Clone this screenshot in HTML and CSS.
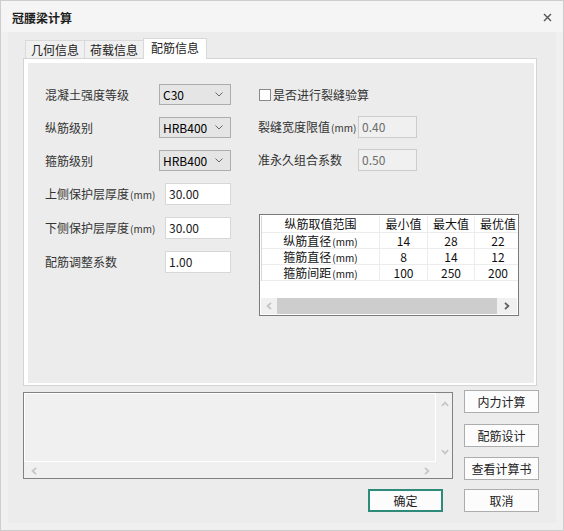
FILE: index.html
```html
<!DOCTYPE html>
<html lang="zh">
<head>
<meta charset="utf-8">
<title>冠腰梁计算</title>
<link rel="stylesheet" href="styles.css">
</head>
<body>
<div class="window">
  <div class="titlebar">
    <span class="title">冠腰梁计算</span>
    <svg class="close" width="9" height="9" viewBox="0 0 9 9"><path d="M1 1L8 8M8 1L1 8" stroke="#555" stroke-width="1.4" fill="none"/></svg>
  </div>
  <div class="client">
    <div class="tabs">
      <div class="tab t1">几何信息</div>
      <div class="tab t2">荷载信息</div>
      <div class="tab t3 active">配筋信息</div>
    </div>
    <div class="panel">
      <div class="panel-inner">
        <div class="col-left">
          <div class="row">
            <span class="lbl lbl-sel">混凝土强度等级</span>
            <div class="select"><span>C30</span><svg width="8" height="5" viewBox="0 0 8 5"><polyline points="0.5,0.5 4,4 7.5,0.5" fill="none" stroke="#666" stroke-width="1"/></svg></div>
          </div>
          <div class="row">
            <span class="lbl lbl-sel">纵筋级别</span>
            <div class="select"><span>HRB400</span><svg width="8" height="5" viewBox="0 0 8 5"><polyline points="0.5,0.5 4,4 7.5,0.5" fill="none" stroke="#666" stroke-width="1"/></svg></div>
          </div>
          <div class="row">
            <span class="lbl lbl-sel">箍筋级别</span>
            <div class="select"><span>HRB400</span><svg width="8" height="5" viewBox="0 0 8 5"><polyline points="0.5,0.5 4,4 7.5,0.5" fill="none" stroke="#666" stroke-width="1"/></svg></div>
          </div>
          <div class="row row-in">
            <span class="lbl lbl-in">上侧保护层厚度<span class="unit">(mm)</span></span>
            <div class="input">30.00</div>
          </div>
          <div class="row row-in">
            <span class="lbl lbl-in">下侧保护层厚度<span class="unit">(mm)</span></span>
            <div class="input">30.00</div>
          </div>
          <div class="row row-in">
            <span class="lbl lbl-in">配筋调整系数</span>
            <div class="input">1.00</div>
          </div>
        </div>
        <div class="col-right">
          <div class="row">
            <span class="checkbox"></span>
            <span class="lbl">是否进行裂缝验算</span>
          </div>
          <div class="row row-in">
            <span class="lbl lbl-r">裂缝宽度限值<span class="unit">(mm)</span></span>
            <div class="input disabled">0.40</div>
          </div>
          <div class="row row-in">
            <span class="lbl lbl-r">准永久组合系数</span>
            <div class="input disabled">0.50</div>
          </div>
          <div class="grid-box">
            <div class="grid">
              <div class="cell head">纵筋取值范围</div>
              <div class="cell head">最小值</div>
              <div class="cell head">最大值</div>
              <div class="cell head">最优值</div>
              <div class="cell">纵筋直径<span class="unit">(mm)</span></div>
              <div class="cell">14</div>
              <div class="cell">28</div>
              <div class="cell">22</div>
              <div class="cell">箍筋直径<span class="unit">(mm)</span></div>
              <div class="cell">8</div>
              <div class="cell">14</div>
              <div class="cell">12</div>
              <div class="cell">箍筋间距<span class="unit">(mm)</span></div>
              <div class="cell">100</div>
              <div class="cell">250</div>
              <div class="cell">200</div>
            </div>
            <div class="hbar">
              <span class="arrow-l"><svg width="6" height="8" viewBox="0 0 6 8"><polyline points="5,0.8 1.6,4 5,7.2" fill="none" stroke="#c4c4c4" stroke-width="1.8"/></svg></span>
              <span class="thumb"></span>
              <span class="arrow-r"><svg width="6" height="8" viewBox="0 0 6 8"><polyline points="1,0.8 4.4,4 1,7.2" fill="none" stroke="#606060" stroke-width="1.8"/></svg></span>
            </div>
          </div>
        </div>
      </div>
    </div>
    <div class="bottom">
      <div class="log">
        <div class="log-content"></div>
        <div class="vscroll">
          <svg width="8" height="6" viewBox="0 0 8 6"><polyline points="0.8,5 4,1.6 7.2,5" fill="none" stroke="#c6c6c6" stroke-width="1.8"/></svg>
          <svg width="8" height="6" viewBox="0 0 8 6"><polyline points="0.8,1 4,4.4 7.2,1" fill="none" stroke="#c6c6c6" stroke-width="1.8"/></svg>
        </div>
        <div class="hscroll">
          <svg width="6" height="8" viewBox="0 0 6 8"><polyline points="5,0.8 1.6,4 5,7.2" fill="none" stroke="#c6c6c6" stroke-width="1.8"/></svg>
          <svg width="6" height="8" viewBox="0 0 6 8"><polyline points="1,0.8 4.4,4 1,7.2" fill="none" stroke="#c6c6c6" stroke-width="1.8"/></svg>
        </div>
        <div class="corner"></div>
      </div>
      <div class="btn-col">
        <div class="btn">内力计算</div>
        <div class="btn b2">配筋设计</div>
        <div class="btn b3">查看计算书</div>
      </div>
    </div>
    <div class="actions">
      <div class="btn primary">确定</div>
      <div class="btn">取消</div>
    </div>
  </div>
</div>
</body>
</html>
```

FILE: styles.css
```css
* { box-sizing: border-box; }
html, body { margin: 0; padding: 0; }
body {
  width: 564px;
  height: 531px;
  font-family: "Noto Sans CJK SC", "Noto Sans", sans-serif;
  font-size: 12px;
  color: #333;
  background: #f0f0f0;
}
.window {
  width: 564px;
  height: 531px;
  border: 1px solid #cdcdcd;
  background: #f0f0f0;
  display: flex;
  flex-direction: column;
}
.titlebar {
  height: 31px;
  flex: none;
  background: #f5f5f5;
  display: flex;
  align-items: center;
  justify-content: space-between;
  padding: 1px 11px 0 11px;
}
.title { font-weight: bold; color: #1e1e1e; font-size: 12px; }
.close { display: block; }
.client {
  margin: 0 7px;
  height: 491px;
  background: #ececec;
  padding: 6px 0 0 15px;
}
.tabs {
  display: flex;
  align-items: flex-end;
  height: 20px;
  margin-left: 2px;
  position: relative;
  z-index: 1;
}
.tab {
  height: 18px;
  border: 1px solid #d9d9d9;
  border-bottom: none;
  background: #f0f0f0;
  text-align: center;
  line-height: 17px;
  color: #222;
  margin-right: -1px;
}
.t1, .t2 { width: 60px; }
.t3 { width: 64px; }
.tab.active {
  height: 21px;
  background: #fff;
  margin-bottom: -1px;
  line-height: 18px;
}
.panel {
  width: 514px;
  height: 328px;
  border: 1px solid #d4d4d4;
  background: #fff;
  padding: 4px 2px 2px 4px;
}
.panel-inner {
  height: 100%;
  background: #ececec;
  padding: 21px 0 0 17px;
  display: flex;
  gap: 27px;
}
.col-left { width: 186px; display: flex; flex-direction: column; gap: 12px; }
.col-right { display: flex; flex-direction: column; gap: 11px; }
.row { display: flex; align-items: center; height: 21px; }
.row-in { height: 22px; }
.lbl { color: #333; white-space: nowrap; line-height: 16px; }
.unit { font-size: 10px; margin-left: 1px; }
.lbl-sel { width: 114px; }
.lbl-in { width: 120px; }
.lbl-r { width: 100px; }
.select {
  width: 72px;
  height: 21px;
  border: 1px solid #adadad;
  background: #e5e5e5;
  display: flex;
  align-items: center;
  justify-content: space-between;
  padding: 0 7px 0 3px;
  color: #000;
}
.select svg { display: block; }
.input {
  width: 66px;
  height: 22px;
  border: 1px solid #d7d7d7;
  background: #fff;
  padding: 0 3px;
  line-height: 19px;
  color: #1a1a1a;
}
.input.disabled {
  width: 59px;
  background: #f0f0f0;
  border-color: #cccccc;
  color: #6d6d6d;
}
.checkbox {
  width: 12px;
  height: 12px;
  border: 1px solid #8a8a8a;
  background: #fff;
  margin: 0 2px 0 1px;
}
.grid-box {
  width: 260px;
  height: 102px;
  margin: 32px 0 0 1px;
  border: 1px solid #7a7a7a;
  background: #fff;
  padding: 1px;
  display: flex;
  flex-direction: column;
  overflow: hidden;
}
.grid {
  display: grid;
  grid-template-columns: 118px 48px 47px 47px;
  border-left: 1px solid #d8d8d8;
  width: max-content;
  flex: none;
}
.cell {
  height: 16px;
  border-right: 1px solid #ececec;
  border-bottom: 1px solid #ececec;
  text-align: center;
  line-height: 15px;
  color: #111;
  white-space: nowrap;
}
.cell.head { height: 17px; line-height: 16px; }
.hbar {
  margin-top: auto;
  height: 16px;
  display: flex;
  background: #f0f0f0;
  flex: none;
}
.arrow-l, .arrow-r { display: flex; align-items: center; justify-content: center; }
.arrow-l { width: 16px; }
.arrow-r { width: 20px; }
.arrow-l svg, .arrow-r svg { display: block; }
.thumb { width: 220px; background: #cdcdcd; }
.bottom { display: flex; gap: 11px; margin-top: 4px; }
.log {
  width: 430px;
  height: 87px;
  margin-top: 2px;
  border: 1px solid #828282;
  background: #f0f0f0;
  display: grid;
  grid-template-columns: 412px 17px;
  grid-template-rows: 69px 17px;
}
.log-content { border: 1px solid #fff; }
.vscroll {
  display: flex;
  flex-direction: column;
  align-items: center;
  justify-content: space-between;
  padding: 8px 0 7px 1px;
}
.vscroll svg, .hscroll svg { display: block; }
.hscroll {
  display: flex;
  align-items: center;
  justify-content: space-between;
  padding: 0 6px 0 7px;
}
.btn-col { display: flex; flex-direction: column; width: 75px; }
.btn {
  width: 75px;
  height: 23px;
  border: 1px solid #adadad;
  background: #fcfcfc;
  display: flex;
  align-items: center;
  justify-content: center;
  color: #222;
  font-size: 12px;
}
.b2 { margin-top: 11px; }
.b3 { margin-top: 10px; }
.actions {
  width: 516px;
  display: flex;
  justify-content: flex-end;
  gap: 21px;
  margin-top: 9px;
}
.btn.primary { border: 2px solid #2e8b7a; }
```
